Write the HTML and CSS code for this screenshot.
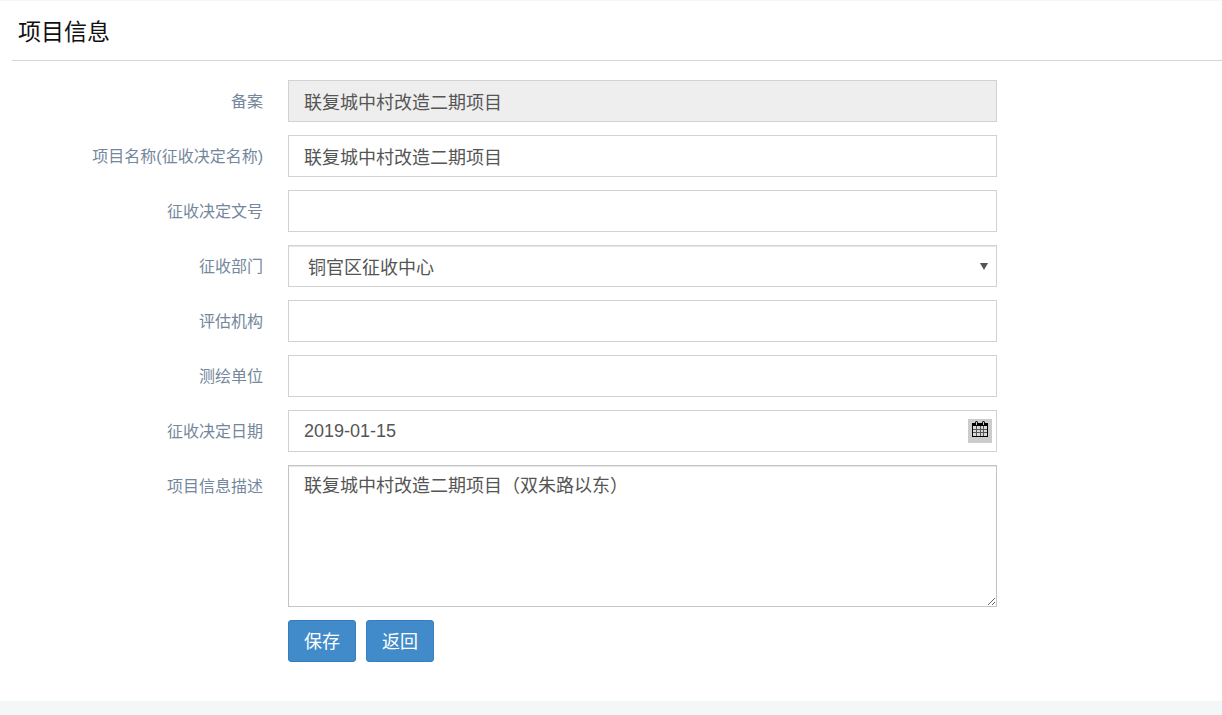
FILE: index.html
```html
<!DOCTYPE html>
<html lang="zh-CN">
<head>
<meta charset="utf-8">
<meta name="viewport" content="width=device-width, initial-scale=1">
<title>项目信息</title>
<link rel="stylesheet" href="styles.css">
</head>
<body>
<main class="panel">
  <h1 class="panel-title">项目信息</h1>
  <form class="form">
    <div class="row">
      <label class="label" for="record">备案</label>
      <input class="control" id="record" type="text" value="联复城中村改造二期项目" disabled>
    </div>
    <div class="row">
      <label class="label" for="name">项目名称(征收决定名称)</label>
      <input class="control" id="name" type="text" value="联复城中村改造二期项目">
    </div>
    <div class="row">
      <label class="label" for="number">征收决定文号</label>
      <input class="control" id="number" type="text">
    </div>
    <div class="row">
      <label class="label" for="department">征收部门</label>
      <div class="select-wrap">
        <select class="control select" id="department">
          <option>铜官区征收中心</option>
        </select>
        <svg class="arrow" viewBox="0 0 8 7" aria-hidden="true"><path d="M0 0h8L4 7z" fill="#555"/></svg>
      </div>
    </div>
    <div class="row">
      <label class="label" for="agency">评估机构</label>
      <input class="control" id="agency" type="text">
    </div>
    <div class="row">
      <label class="label" for="survey">测绘单位</label>
      <input class="control" id="survey" type="text">
    </div>
    <div class="row">
      <label class="label" for="date">征收决定日期</label>
      <div class="date">
        <input class="control" id="date" type="text" value="2019-01-15">
        <button class="date-button" type="button" aria-label="选择日期">
          <svg class="date-icon" viewBox="0 0 16 17" aria-hidden="true">
            <path d="M0 2h16v14H0z" fill="#000"/>
            <path d="M1 5h14v10H1z" fill="#d8d8d8"/>
            <path d="M4 5h1v10H4zM8 5h1v10H8zM11 5h1v10h-1zM1 8h14v1H1zM1 11h14v1H1z" fill="#555"/>
            <path d="M3 4V2q0-2 1.500-2T6 2v2zM10 4V2q0-2 1.500-2T13 2v2z" fill="#000"/>
            <path d="M4 1h1v3H4zM11 1h1v3h-1z" fill="#ccc"/>
          </svg>
        </button>
      </div>
    </div>
    <div class="row">
      <label class="label" for="description">项目信息描述</label>
      <textarea class="control textarea" id="description">联复城中村改造二期项目（双朱路以东）</textarea>
    </div>
    <div class="row">
      <div class="actions">
        <button class="button" type="submit">保存</button>
        <button class="button" type="button">返回</button>
      </div>
    </div>
  </form>
</main>
</body>
</html>
```
FILE: styles.css
```css
* {
  box-sizing: border-box;
}

body {
  margin: 0;
  min-height: 100vh;
  background: #f3f7f8;
  color: #555;
  font-family: "Liberation Sans", "Noto Sans CJK SC", sans-serif;
  font-size: 18px;
  font-weight: 400;
}

.panel {
  margin-top: 1px;
  padding-bottom: 39px;
  background: #fff;
  display: flow-root;
}

.panel-title {
  margin: 0 0 19px 12px;
  padding: 17px 6px 14px;
  border-bottom: 1px solid #d5d5d5;
  color: #111;
  font-size: 23px;
  font-weight: 400;
  line-height: 28px;
}

.form {
  display: flex;
  flex-direction: column;
  gap: 13px;
}

.row {
  display: grid;
  grid-template-columns: 288fr 709fr 225fr;
  align-items: start;
}

.label {
  padding: 8px 25px 0 0;
  color: #74879c;
  font-size: 16px;
  line-height: 28px;
  text-align: right;
}

.control {
  display: block;
  width: 100%;
  height: 42px;
  margin: 0;
  padding: 6px 15px;
  border: 1px solid #d2d2d2;
  border-radius: 0;
  background: #fff;
  color: #555;
  font: inherit;
  line-height: 28px;
}

.control:disabled {
  background: #eee;
}

.select-wrap,
.date {
  position: relative;
}

.select {
  appearance: none;
  padding: 8px 19px 4px;
  box-shadow: inset 0 1px 1px rgba(0, 0, 0, 0.1);
}

.arrow {
  position: absolute;
  top: 18px;
  right: 9px;
  width: 8px;
  height: 7px;
  pointer-events: none;
}

.date-button {
  position: absolute;
  top: 9px;
  right: 5px;
  width: 24px;
  height: 24px;
  padding: 2px 4px 5px;
  border: 0;
  background: #ccc;
}

.date-icon {
  display: block;
  width: 16px;
  height: 17px;
}

.textarea {
  height: 142px;
  border-color: #c4c4c4;
  box-shadow: inset 0 1px 1px rgba(0, 0, 0, 0.1);
  resize: vertical;
}

.actions {
  grid-column: 2;
  display: flex;
  gap: 10px;
}

.button {
  height: 42px;
  padding: 7px 15px 5px;
  border: 1px solid #357ebd;
  border-radius: 3px;
  background: #428bca;
  color: #fff;
  font: inherit;
  line-height: 28px;
}
```
